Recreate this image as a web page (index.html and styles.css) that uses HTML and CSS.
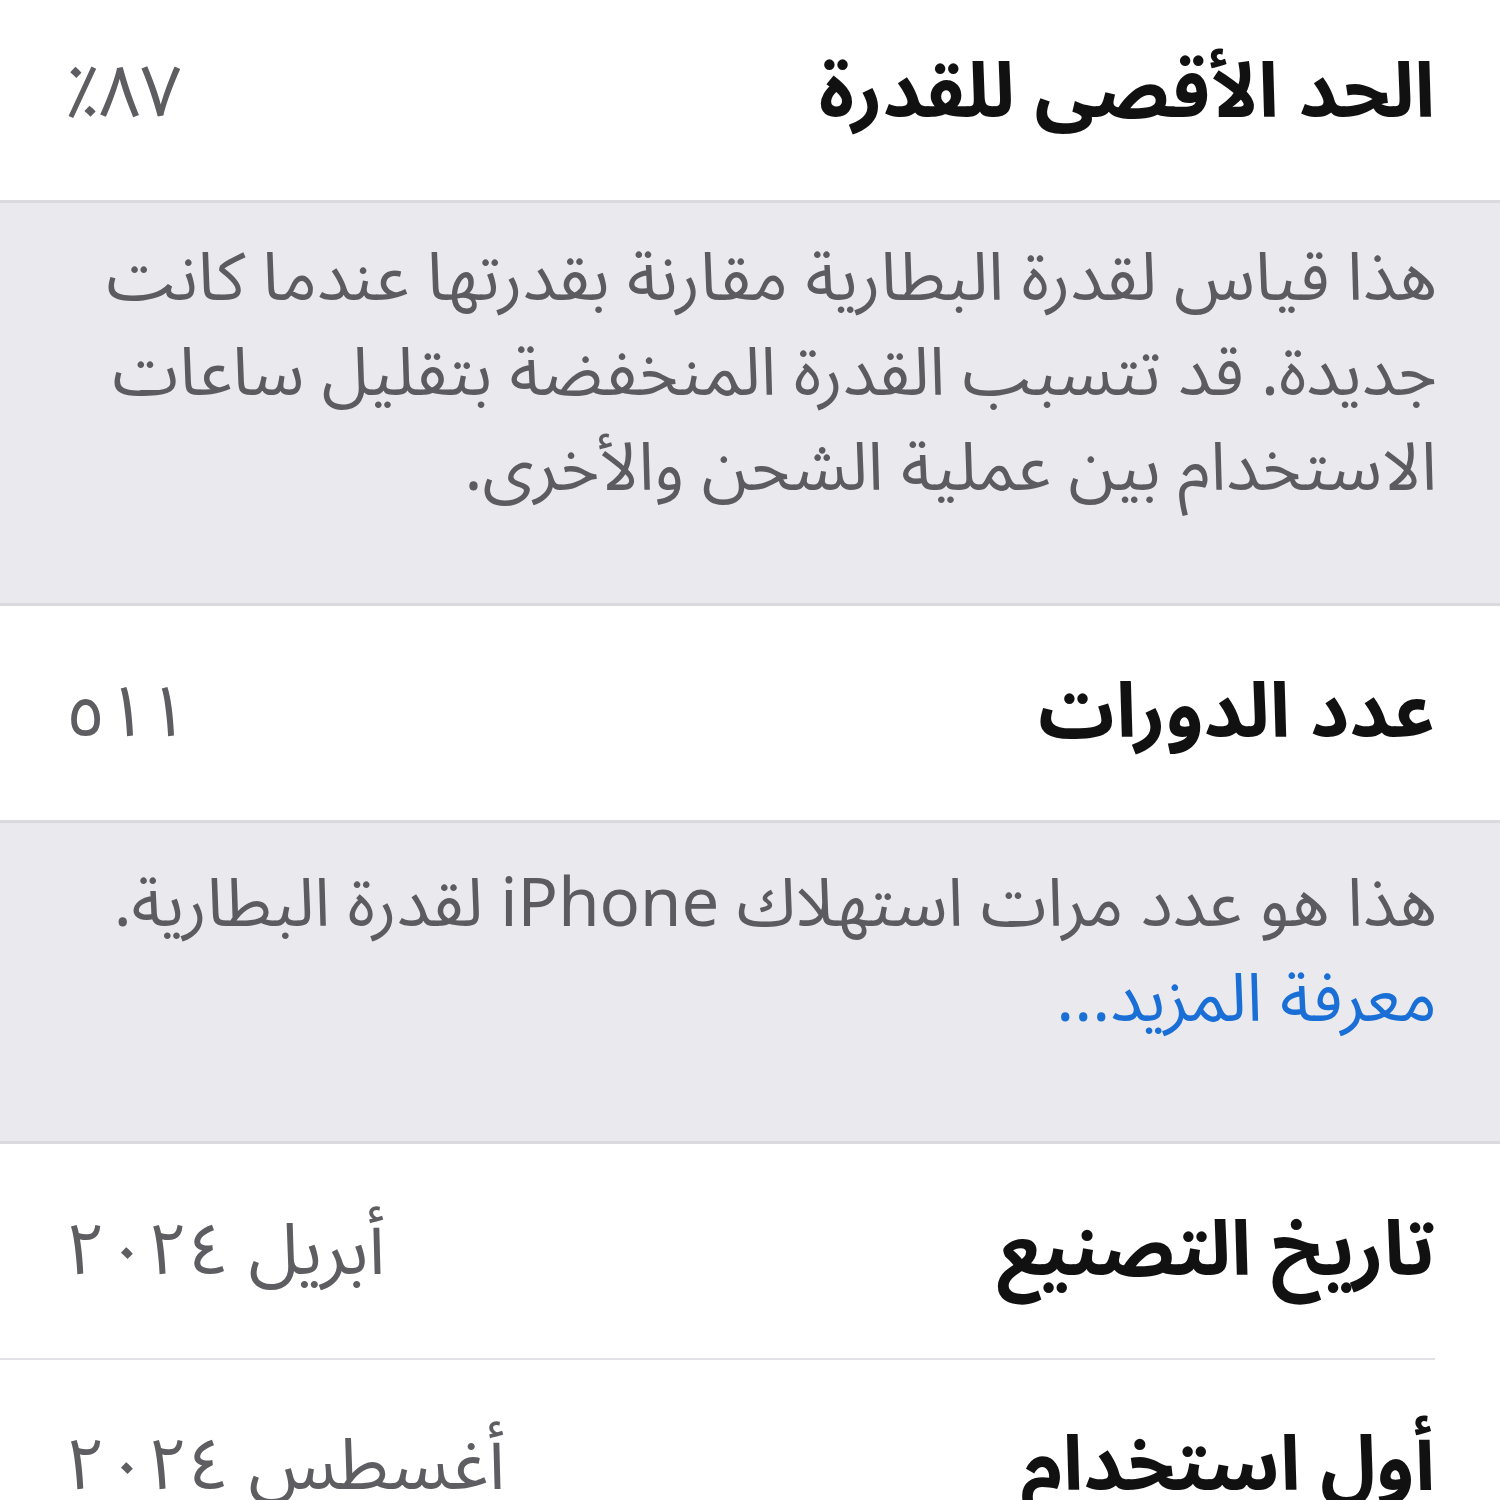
FILE: index.html
```html
<!DOCTYPE html>
<html lang="ar" dir="rtl">
  <head>
    <meta charset="UTF-8" />
    <meta name="viewport" content="width=device-width, initial-scale=1.0" />
    <title>صحة البطارية</title>
    <link rel="stylesheet" href="styles.css">
  </head>
  <body>
    <div class="group">
      <div class="row first">
        <span class="label">الحد الأقصى للقدرة</span>
        <span class="value">٨٧٪</span>
      </div>
    </div>
    <div class="footer">
      هذا قياس لقدرة البطارية مقارنة بقدرتها عندما كانت<br>
      جديدة. قد تتسبب القدرة المنخفضة بتقليل ساعات<br>
      الاستخدام بين عملية الشحن والأخرى.
    </div>

    <div class="group">
      <div class="row">
        <span class="label">عدد الدورات</span>
        <span class="value">٥١١</span>
      </div>
    </div>
    <div class="footer with-link">
      هذا هو عدد مرات استهلاك iPhone لقدرة البطارية.<br>
      <a href="#">معرفة المزيد...</a>
    </div>

    <div class="group">
      <div class="row">
        <span class="label">تاريخ التصنيع</span>
        <span class="value">أبريل ٢٠٢٤</span>
      </div>
      <div class="row">
        <span class="label">أول استخدام</span>
        <span class="value">أغسطس ٢٠٢٤</span>
      </div>
    </div>
  </body>
</html>
```

FILE: styles.css
```css
body {
  font-family: "Noto Sans Arabic", "DejaVu Sans", sans-serif;
  background-color: #e9e9ee; /* grouped background */
  margin: 0;
  overflow: hidden;
}

.group {
  background-color: #ffffff;
  border-top: 3px solid #dadade;
  border-bottom: 3px solid #dadade;
}

.group:first-child {
  border-top: none;
}

.row {
  height: 214px;
  box-sizing: border-box;
  display: flex;
  justify-content: space-between;
  align-items: center;
  padding: 0 65px;
}

.row.first {
  height: 200px;
  padding-bottom: 14px;
}

/* inset separator, starts under the label on the right */
.row + .row {
  border-top: 2px solid #e2e2e6;
  margin-right: 65px;
  padding-right: 0;
}

.label {
  font-size: 76px;
  font-weight: bold;
  color: #111111;
}

.value {
  font-size: 72px;
  color: #5e5e62;
}

.footer {
  padding: 28px 63px 87px 60px;
  font-size: 67px;
  line-height: 95px;
  color: #5b5b60;
}

.footer.with-link {
  padding-top: 34px;
  padding-bottom: 94px;
}

.footer a {
  color: #1a6fd6;
  text-decoration: none;
}
```
